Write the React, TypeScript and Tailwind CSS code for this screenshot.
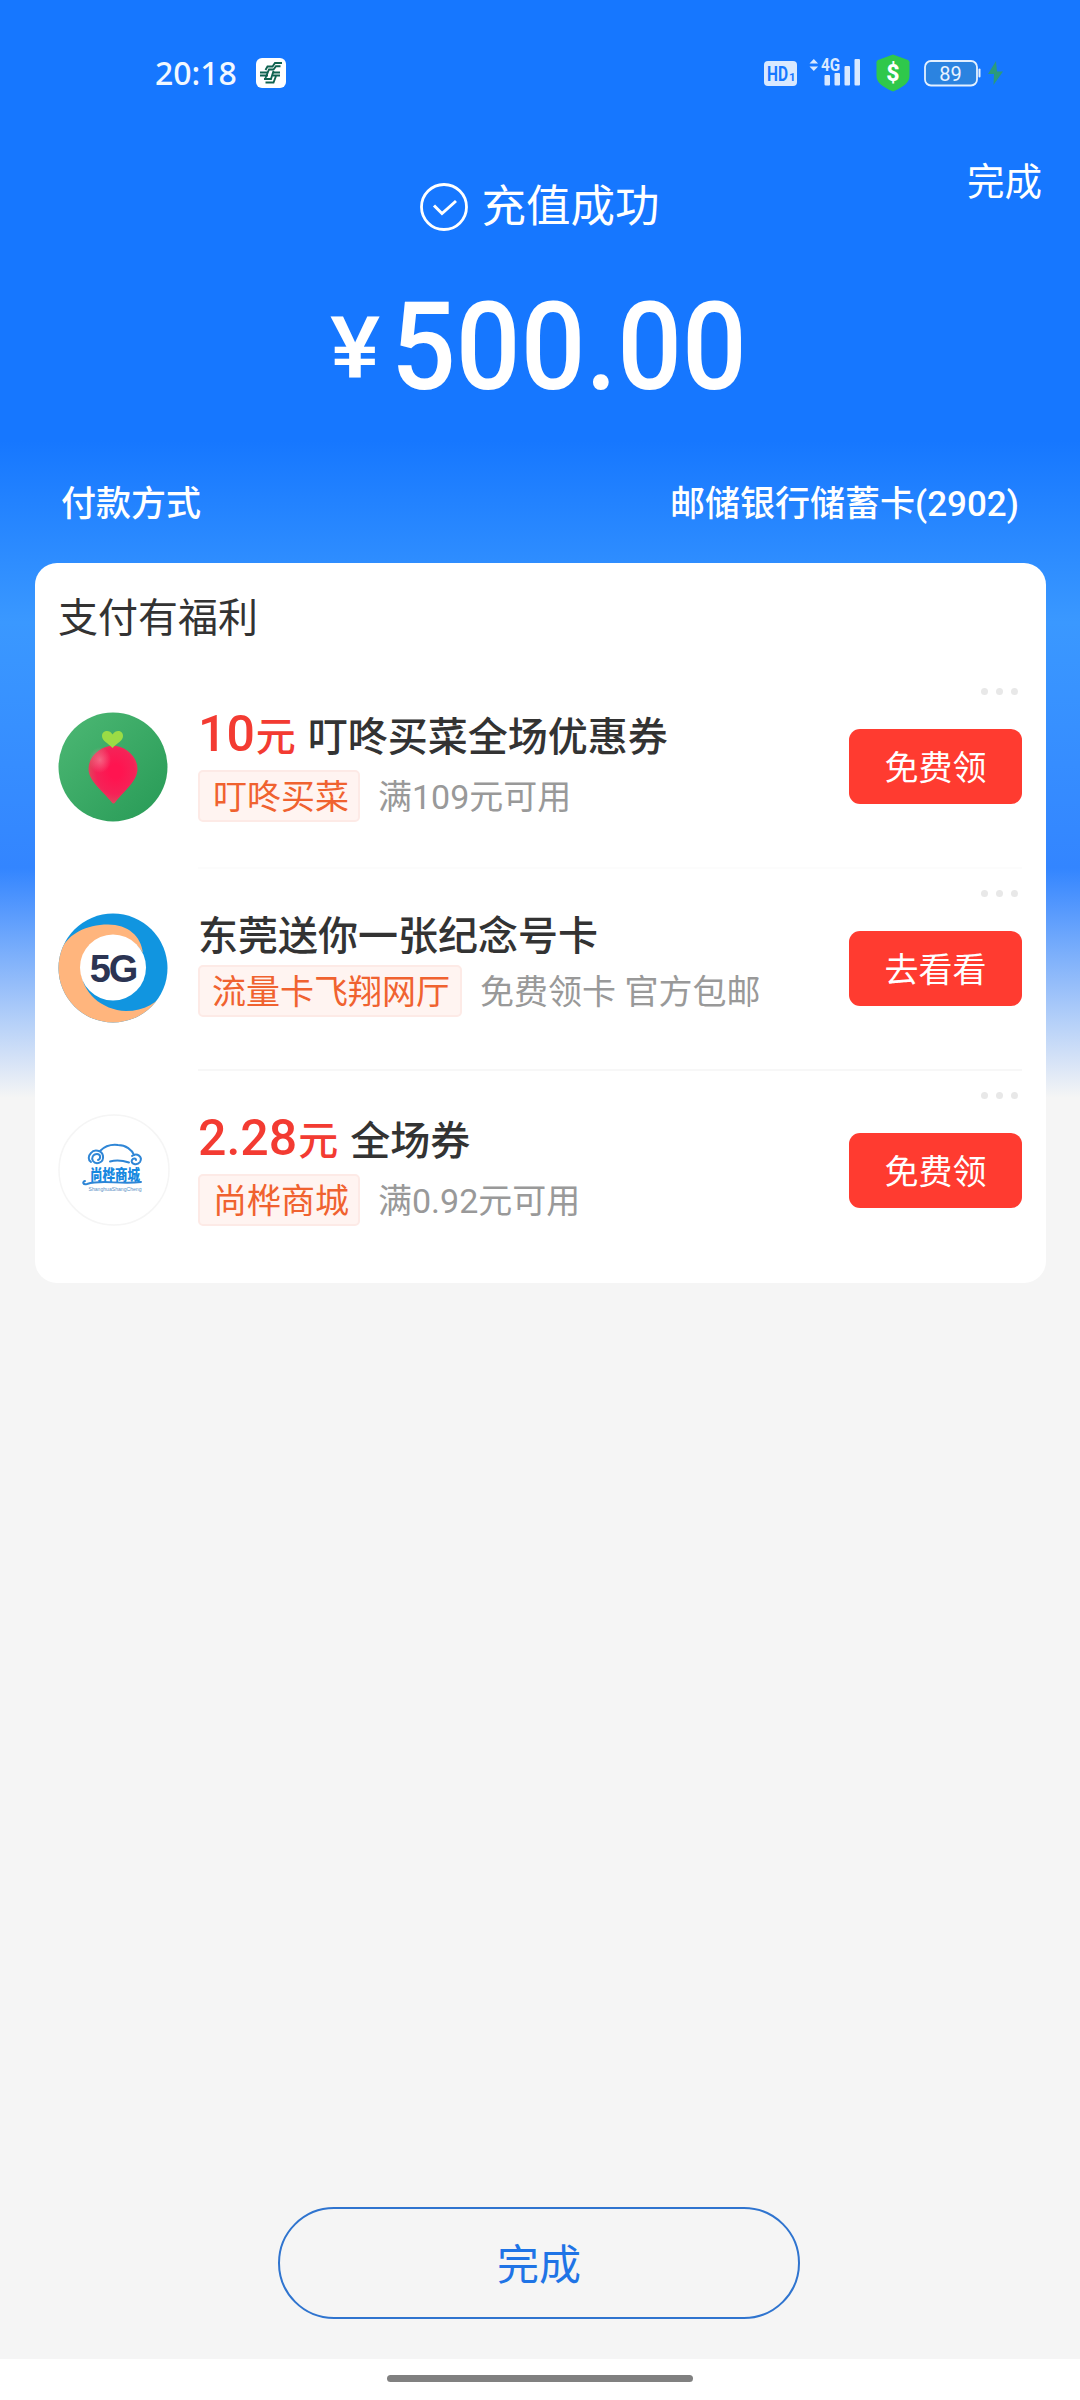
import type { ReactNode } from "react";
import clsx from "clsx";

type Offer = {
  price?: string;
  title: string;
  shop: string;
  note: string;
  action: string;
  logo: ReactNode;
};

function BankIcon() {
  return (
    <svg width="30" height="30" viewBox="0 0 30 30">
      <rect width="30" height="30" rx="6" fill="#fff" />
      <g fill="none" stroke="#0f6350" strokeWidth="1.900">
        <path d="M26 5h-7l-2.500 3.500h-5L9.500 12" />
        <path d="M24.500 8.200h-4.500L17.500 11.500h-4.500l-3.500 8.500" />
        <path d="M4 14.500h8M4 17.500h8M24 14.500h-7M24 17.500h-7" />
        <path d="M17.500 13l-2.500 8H8M9.500 24.500h8L20 18" />
      </g>
    </svg>
  );
}

function HdIcon() {
  return (
    <svg width="33" height="25" viewBox="0 0 33 25">
      <rect width="33" height="25" rx="4" fill="#d9e9ff" />
      <text
        x="3"
        y="19.500"
        fontSize="20"
        fontWeight="700"
        textLength="21"
        lengthAdjust="spacingAndGlyphs"
        fill="#1677ff"
        className="font-['Roboto',sans-serif]"
      >
        HD
      </text>
      <text
        x="25"
        y="19.500"
        fontSize="11.500"
        fontWeight="700"
        fill="#1677ff"
        className="font-['Roboto',sans-serif]"
      >
        1
      </text>
    </svg>
  );
}

function SignalIcon() {
  return (
    <svg width="52" height="44" viewBox="0 -6 52 44" fill="#d9e9ff">
      <path d="M0.500 6.500 4.800 2l4.300 4.500zM0.500 9.500h8.600L4.800 14z" />
      <text
        x="12"
        y="14"
        fontSize="18"
        fontWeight="700"
        textLength="19"
        lengthAdjust="spacingAndGlyphs"
        className="font-['Roboto',sans-serif]"
      >
        4G
      </text>
      <rect x="15.500" y="18" width="5.500" height="10.500" rx="1" />
      <rect x="25.500" y="16" width="5.500" height="12.500" rx="1" />
      <rect x="35.500" y="9" width="5.500" height="19.500" rx="1" />
      <rect x="45.500" y="2" width="5.500" height="26.500" rx="1" />
    </svg>
  );
}

function ShieldIcon() {
  return (
    <svg width="34" height="38" viewBox="0 0 34 38">
      <path
        d="M17 0.500 32 6q1.500.7 1.500 2.300V22c0 6-5 10.500-16.500 15.500C5.500 32.500.5 28 .5 22V8.300Q.5 6.700 2 6z"
        fill="#2fc84b"
      />
      <text
        x="17"
        y="26.500"
        textAnchor="middle"
        fontSize="23"
        fontWeight="800"
        fill="#fff"
        className="font-['Roboto',sans-serif]"
      >
        $
      </text>
    </svg>
  );
}

function BatteryIcon() {
  return (
    <svg width="79" height="28" viewBox="0 0 79 28">
      <rect
        x="1"
        y="2"
        width="52"
        height="24.500"
        rx="6"
        fill="#2b83e0"
        stroke="#e3f0ff"
        strokeWidth="1.800"
      />
      <rect x="54.500" y="9.500" width="2" height="9" rx="1" fill="#e3f0ff" />
      <text
        x="26.500"
        y="21.500"
        textAnchor="middle"
        fontSize="20"
        fill="#e9f3ff"
        className="font-['Roboto',sans-serif]"
      >
        89
      </text>
      <path d="M72 2 64 15h6l-.500 11L79 12.500h-6z" fill="#2b9a7c" />
    </svg>
  );
}

function RadishLogo() {
  return (
    <svg width="110" height="110" viewBox="0 0 110 110">
      <defs>
        <linearGradient id="leafBg" x1="0" y1="0" x2="1" y2="1">
          <stop offset="0" stopColor="#4db874" />
          <stop offset="1" stopColor="#279a56" />
        </linearGradient>
        <radialGradient id="radish" cx="0.550" cy="0.450" r="0.600">
          <stop offset="0.200" stopColor="#ff1450" />
          <stop offset="0.650" stopColor="#f52257" />
          <stop offset="1" stopColor="#d9505f" />
        </radialGradient>
        <radialGradient id="shine">
          <stop offset="0" stopColor="#f590a0" stopOpacity="0.600" />
          <stop offset="1" stopColor="#f590a0" stopOpacity="0" />
        </radialGradient>
      </defs>
      <circle cx="55" cy="55" r="54.500" fill="url(#leafBg)" />
      <path
        d="M55 33.500C66 34 79.500 43 79.500 57 79.500 69 67 78 57.500 90q-2 3-4 0C44 78 30.500 69 30.500 57 30.500 43 44 34 55 33.500z"
        fill="url(#radish)"
      />
      <ellipse cx="42" cy="48" rx="11" ry="13" fill="url(#shine)" />
      <path
        d="M54.500 36C50 31 44 29 44 24c0-5.500 7.500-7 10.500-1.500C58 17 65 18.500 65 24c0 5-6 7-10.500 12z"
        fill="#9bdc45"
      />
    </svg>
  );
}

function FiveGLogo() {
  return (
    <svg width="110" height="110" viewBox="0 0 110 110">
      <defs>
        <clipPath id="disc">
          <circle cx="55" cy="55" r="54.500" />
        </clipPath>
      </defs>
      <g clipPath="url(#disc)">
        <rect width="110" height="110" fill="#1195e0" />
        <path
          d="M4 35L0 45V110H110V76C100 90 86 98 68 98 44 97 23 80 23 55c0-18 14-32 32-32 14 0 24 7 30 17C83 23 70 11.500 50 11.500 28 11.500 11 21 4 35z"
          fill="#ffb57d"
        />
      </g>
      <circle cx="55" cy="54.500" r="33" fill="#fff" />
      <text
        x="55"
        y="69"
        textAnchor="middle"
        fontSize="38"
        fontWeight="700"
        letterSpacing="-2"
        fill="#2b3453"
        className="font-['Liberation_Sans',sans-serif]"
      >
        5G
      </text>
    </svg>
  );
}

function MallLogo() {
  return (
    <svg width="112" height="112" viewBox="0 0 112 112">
      <circle cx="56" cy="56" r="55" fill="#fff" stroke="#f5f5f5" strokeWidth="1.500" />
      <g fill="none" stroke="#2f86d6" strokeWidth="2" strokeLinecap="round">
        <path d="M40 46c3-1 3-6-1-6-4 0-6 4-4 7 3 4 11 2 10-5-1-6-9-7-12-3-3 3-3 7 0 9" />
        <path d="M42 37c4-4 10-7 18-6 8 0 14 5 16 10" />
        <path d="M74 42c5-4 11 1 8 6-3 4-10 2-8-2 1-2 4-2 4 0" />
        <path d="M52 47.500c7-2 13-1 19 1" />
        <path d="M27 67c-3 1-2 4 2 3 16-5 32 1 54-2" />
      </g>
      <text
        x="57"
        y="65.500"
        textAnchor="middle"
        fontSize="15"
        fontWeight="900"
        textLength="50"
        lengthAdjust="spacingAndGlyphs"
        fill="#1688e0"
        className="font-['Noto_Sans_CJK_SC',sans-serif]"
      >
        尚桦商城
      </text>
      <text
        x="57"
        y="77"
        textAnchor="middle"
        fontSize="5.500"
        textLength="53"
        lengthAdjust="spacingAndGlyphs"
        fill="#5a8fc4"
        className="font-['Liberation_Sans',sans-serif]"
      >
        ShanghuaShangCheng
      </text>
    </svg>
  );
}

const offers: Offer[] = [
  {
    price: "10",
    title: "叮咚买菜全场优惠券",
    shop: "叮咚买菜",
    note: "满109元可用",
    action: "免费领",
    logo: <RadishLogo />,
  },
  {
    title: "东莞送你一张纪念号卡",
    shop: "流量卡飞翔网厅",
    note: "免费领卡 官方包邮",
    action: "去看看",
    logo: <FiveGLogo />,
  },
  {
    price: "2.28",
    title: "全场券",
    shop: "尚桦商城",
    note: "满0.92元可用",
    action: "免费领",
    logo: <MallLogo />,
  },
];

function OfferRow({ offer, index }: { offer: Offer; index: number }) {
  return (
    <li className="flex h-[202px] pr-6 pl-[23px]">
      <div
        className={clsx(
          "w-[112px] shrink-0",
          ["pt-[45px]", "pt-[44px]", "pt-[43px]"][index]
        )}
      >
        {offer.logo}
      </div>
      <div
        className={clsx(
          "ml-[28px] flex flex-1 justify-between border-b-2",
          ["border-[#fcfcfc]", "border-[#f7f7f7]", "border-transparent"][index]
        )}
      >
        <div className={offer.price ? "pt-[41px]" : "pt-[38px]"}>
          <h3 className="flex h-[60px] items-baseline text-[40px] leading-[60px] font-medium whitespace-nowrap text-[#333]">
            {offer.price && (
              <span className="mr-[12px] text-[#f33b32]">
                <span className="text-[50px] leading-none">{offer.price}</span>
                <span className="ml-px">元</span>
              </span>
            )}
            {offer.title}
          </h3>
          <div
            className={clsx(
              "flex h-[52px] items-center text-[34px] leading-[51px] whitespace-nowrap",
              offer.price ? "mt-[2px]" : "-mt-[2px]"
            )}
          >
            <span
              className={clsx(
                "h-[52px] rounded-[5px] border-2 border-[#fdeae6] bg-[#fff4f1] text-[#f0622f]",
                offer.price ? "pr-[9px] pl-[13px]" : "pr-[10px] pl-[12px]"
              )}
            >
              {offer.shop}
            </span>
            <span className="ml-[18px] pt-[3px] text-[#999]">{offer.note}</span>
          </div>
        </div>
        <div className="flex flex-col items-end">
          <div className="mt-[21px] mr-[4px] flex gap-2">
            <i className="size-[7px] rounded-full bg-[#e8e8e8]" />
            <i className="size-[7px] rounded-full bg-[#e8e8e8]" />
            <i className="size-[7px] rounded-full bg-[#e8e8e8]" />
          </div>
          <button className="mt-[34px] h-[75px] w-[173px] rounded-[11px] bg-[#ff3b30] pt-[3px] text-[34px] text-white">
            {offer.action}
          </button>
        </div>
      </div>
    </li>
  );
}

export default function App() {
  return (
    <div className="flex h-[2400px] w-[1080px] flex-col bg-[#f5f5f5] bg-[linear-gradient(180deg,#1677ff_0px,#1677ff_440px,#3a98ff_622px,#3385ff_868px,#f5f5f5_1098px)] font-['Roboto','Noto_Sans_CJK_SC',sans-serif]">
      {/* 状态栏 */}
      <div className="flex h-[146px] justify-between pr-[77px] pl-[155px]">
        <div className="flex items-center">
          <span className="font-['Noto_Sans',sans-serif] text-[32px] leading-none font-medium text-[#f2f8ff]">
            20:18
          </span>
          <span className="ml-[19px]">
            <BankIcon />
          </span>
        </div>
        <div className="flex items-center">
          <HdIcon />
          <span className="mr-[15px] ml-[12px]">
            <SignalIcon />
          </span>
          <ShieldIcon />
          <span className="ml-[14px]">
            <BatteryIcon />
          </span>
        </div>
      </div>

      {/* 充值结果 */}
      <header className="relative flex h-[294px] flex-col items-center text-white">
        <button className="absolute top-[8px] right-[38px] text-[37.500px] leading-[56px]">
          完成
        </button>
        <div className="mt-[27px] flex h-[68px] items-center gap-[13px] text-[44.500px]">
          <svg width="48" height="48" viewBox="0 0 48 48" fill="none" stroke="#fff">
            <circle cx="24" cy="24" r="22.500" strokeWidth="2.800" />
            <path d="m14 22.500 8 8L36 18" strokeWidth="3" />
          </svg>
          <h1>充值成功</h1>
        </div>
        <div className="mt-[46px] ml-[330px] flex items-baseline self-start leading-[122px]">
          <span className="w-[61px] origin-left -translate-y-[11px] scale-x-110 text-[86px] font-medium">
            ¥
          </span>
          <span className="origin-left scale-x-[0.935] text-[122px] font-medium">
            500.00
          </span>
        </div>
      </header>

      <div className="flex h-[123px] items-center justify-between px-[61px] pt-[7px] text-[35px] font-medium text-white">
        <span>付款方式</span>
        <span>邮储银行储蓄卡(2902)</span>
      </div>

      {/* 优惠列表 */}
      <section className="mr-[34px] ml-[35px] h-[720px] rounded-[22px] bg-white">
        <h2 className="h-[104px] pt-[26px] pl-[23px] text-[40px] leading-[60px] text-[#333]">
          支付有福利
        </h2>
        <ul>
          {offers.map((offer, i) => (
            <OfferRow key={offer.shop} offer={offer} index={i} />
          ))}
        </ul>
      </section>

      {/* 底部按钮 */}
      <div className="mt-auto flex justify-center">
        <button className="mr-[2px] mb-[40px] h-[112px] w-[522px] rounded-full border-2 border-[#2f74cf] pt-[5px] text-[42px] text-[#1f74e6]">
          完成
        </button>
      </div>
      <div className="flex h-[41px] justify-center bg-white pt-4">
        <div className="h-[7px] w-[306px] rounded-full bg-[#808080]" />
      </div>
    </div>
  );
}
